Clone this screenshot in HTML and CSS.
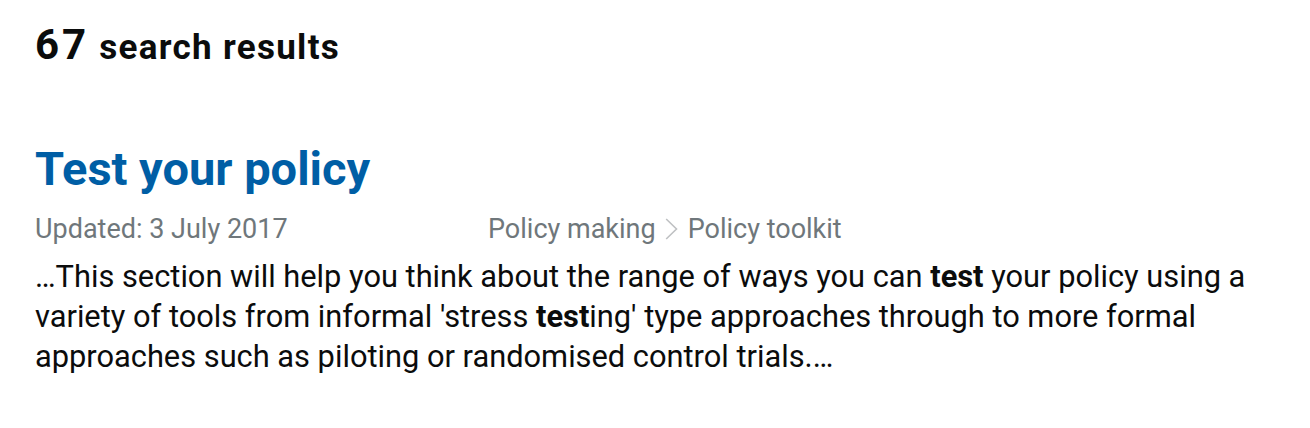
FILE: index.html
```html
<!DOCTYPE html>
<html lang="en">
<head>
<meta charset="utf-8">
<title>Search results</title>
<link rel="stylesheet" href="styles.css">
</head>
<body>
<main class="page">
  <h1 class="count"><span class="count-number">67</span> search results</h1>
  <ol class="results">
    <li class="result">
      <h2 class="result-title"><a class="result-link" href="#">Test your policy</a></h2>
      <div class="meta">
        <span class="meta-date">Updated: 3 July 2017</span>
        <span class="meta-crumbs">Policy making<span class="chev"><svg width="13" height="22" viewBox="0 0 13 22" aria-hidden="true"><path d="M1.2 1 L11.5 11 L1.2 21" fill="none" stroke="#bfc1c3" stroke-width="1.6"/></svg></span>Policy toolkit</span>
      </div>
      <p class="summary">…This section will help you think about the range of ways you can <strong>test</strong> your policy using a variety of tools from informal 'stress <strong>test</strong>ing' type approaches through to more formal approaches such as piloting or randomised control trials.…</p>
    </li>
  </ol>
</main>
</body>
</html>
```
FILE: styles.css
```css
html, body {
  margin: 0;
  padding: 0;
  background: #ffffff;
}
body {
  font-family: Roboto, "Liberation Sans", sans-serif;
  color: #0b0c0c;
}
.page {
  padding: 24px 35px 0 35px;
  width: 1240px;
}
.count {
  margin: 0;
  font-weight: 700;
  font-size: 35px;
  line-height: 40px;
  letter-spacing: 1.3px;
}
.count-number {
  font-size: 42px;
  line-height: 1;
  letter-spacing: 3px;
}
.results {
  list-style: none;
  margin: 0;
  padding: 0;
}
.result {
  margin-top: 73px;
}
.result-title {
  margin: 0;
  font-size: 47px;
  line-height: 56px;
  font-weight: 700;
}
.result-link {
  color: #005ea5;
  text-decoration: none;
}
.meta {
  display: flex;
  margin-top: 14px;
  font-size: 27px;
  line-height: 36px;
  color: #6f777b;
}
.meta-date {
  width: 453px;
  flex: none;
}
.meta-crumbs {
  display: flex;
  align-items: center;
}
.chev {
  display: inline-flex;
  margin: 0 10px 0 9px;
}
.summary {
  margin: 10px 0 0 0;
  font-size: 30.8px;
  line-height: 40px;
}
.summary strong {
  font-weight: 700;
}
```
